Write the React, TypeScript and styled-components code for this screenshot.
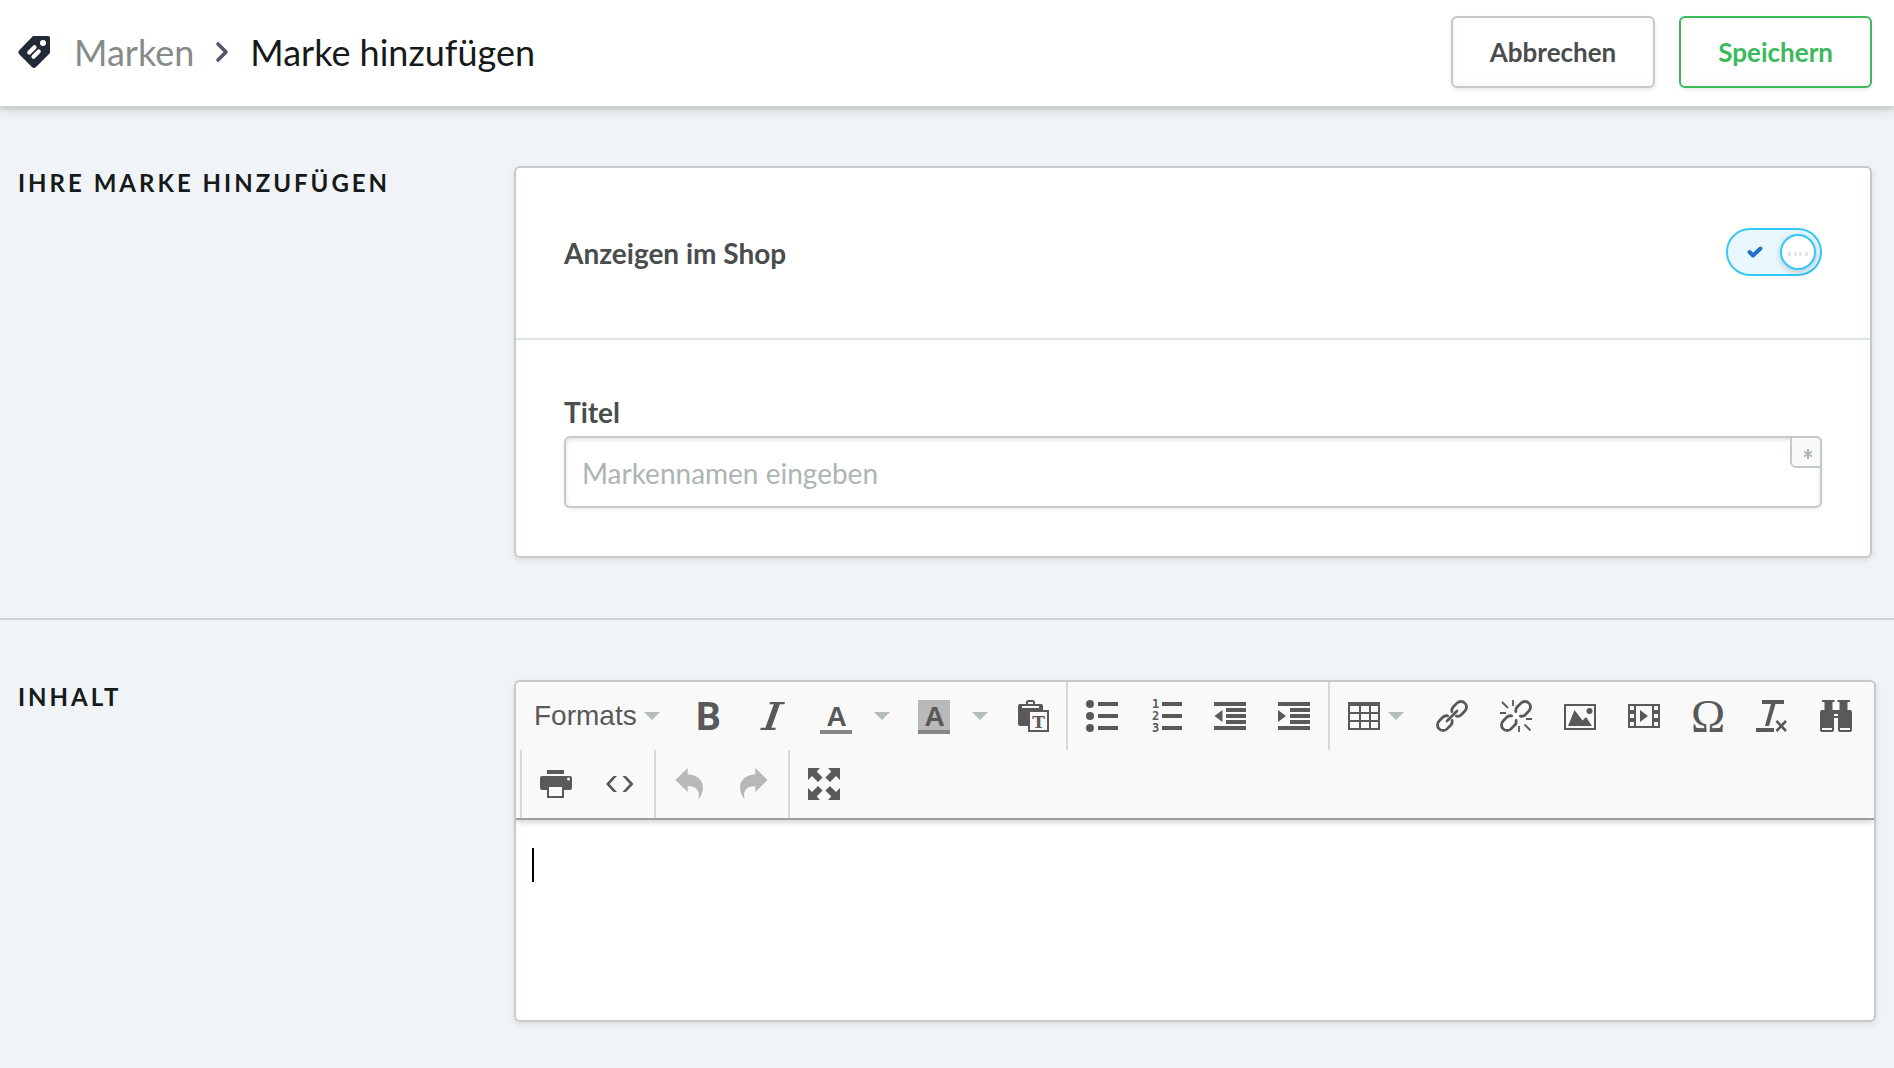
import React, { useState } from "react";
import styled, { createGlobalStyle } from "styled-components";

const line = "#c4c9cc";
const sans = `Lato, "Open Sans", sans-serif`;

const GlobalStyle = createGlobalStyle`
  *, *::before, *::after { box-sizing: border-box; }
  body {
    margin: 0;
    min-height: 100vh;
    background: #f0f4f7;
    color: #171a1a;
    font-family: ${sans};
  }
`;

const Header = styled.header`
  display: flex;
  align-items: center;
  justify-content: space-between;
  padding: 16px 22px 18px 18px;
  background: #fff;
  box-shadow: 0 4px 2px rgba(60, 70, 70, 0.1), 0 4px 12px rgba(0, 0, 0, 0.12);
`;

const Breadcrumb = styled.nav`
  display: flex;
  align-items: center;
  gap: 22px;
  font-size: 36px;
  line-height: 44px;
`;

const CrumbLink = styled.a`
  color: #858c8a;
  text-decoration: none;
`;

const CrumbTitle = styled.h1`
  margin: 0;
  font: inherit;
  color: #171a1a;
`;

const Actions = styled.div`
  display: flex;
  gap: 24px;
`;

const ActionButton = styled.button<{ $color: string; $line: string }>`
  height: 72px;
  padding: 0 37px;
  border: 2px solid ${(p) => p.$line};
  border-radius: 6px;
  background: #fff;
  color: ${(p) => p.$color};
  font: 700 26px/32px ${sans};
  box-shadow: 0 2px 4px rgba(0, 0, 0, 0.08), inset 0 -2px 8px rgba(0, 0, 0, 0.04);
  cursor: pointer;
`;

const Section = styled.section`
  display: grid;
  grid-template-columns: 496px minmax(0, 1fr);
  padding: 60px 22px 60px 18px;

  & + & {
    border-top: 2px solid #ced3d6;
  }
`;

const SectionTitle = styled.h2`
  margin: 0;
  font-size: 24px;
  font-weight: 700;
  line-height: 34px;
  letter-spacing: 3px;
  text-transform: uppercase;
`;

const Card = styled.div`
  border: 2px solid ${line};
  border-radius: 6px;
  background: #fff;
  box-shadow: 0 2px 6px rgba(0, 0, 0, 0.1);
`;

const CardRow = styled.div`
  padding: 48px;

  & + & {
    border-top: 2px solid #dfe5e4;
  }
`;

const SwitchRow = styled(CardRow)`
  display: flex;
  align-items: flex-start;
  justify-content: space-between;
  padding: 60px 48px;
`;

const FieldLabel = styled.label`
  display: block;
  color: #4a4d4d;
  font-size: 28px;
  font-weight: 700;
  line-height: 48px;
`;

const SwitchLabel = styled(FieldLabel)`
  line-height: 50px;
`;

const Switch = styled.label`
  display: flex;
  cursor: pointer;
`;

const SwitchInput = styled.input`
  position: absolute;
  width: 96px;
  height: 48px;
  margin: 0;
  opacity: 0;
  cursor: pointer;
`;

const Track = styled.span<{ $on: boolean }>`
  display: flex;
  flex-direction: ${(p) => (p.$on ? "row" : "row-reverse")};
  align-items: center;
  justify-content: space-between;
  width: 96px;
  height: 48px;
  padding: 0 4px 0 19px;
  border: 2px solid #34c8f9;
  border-radius: 24px;
  background: #e8f8fe;
`;

const Knob = styled.span`
  display: flex;
  align-items: center;
  justify-content: center;
  width: 36px;
  height: 36px;
  padding-top: 3px;
  border: 2px solid #34c8f9;
  border-radius: 50%;
  background: #fff;
  box-shadow: 0 2px 6px rgba(0, 0, 0, 0.2);
`;

const InputWrap = styled.div`
  position: relative;
`;

const TextInput = styled.input`
  display: block;
  width: 100%;
  height: 72px;
  padding: 2px 16px 0;
  border: 2px solid ${line};
  border-radius: 6px;
  background: #fff;
  color: #171a1a;
  font: 400 28px/36px ${sans};
  box-shadow: inset 0 2px 4px rgba(0, 0, 0, 0.12), 0 2px 4px rgba(0, 0, 0, 0.06);
  outline: none;

  &::placeholder {
    color: #acb5b3;
    opacity: 1;
  }
`;

const Required = styled.span`
  position: absolute;
  top: 0;
  right: 0;
  display: flex;
  align-items: center;
  justify-content: center;
  width: 32px;
  height: 32px;
  padding: 3px 0 0 4px;
  border: 2px solid ${line};
  border-radius: 0 6px 0 6px;
  background: #f9f9f9;
`;

const Editor = styled.div`
  margin-right: -4px;
  border: 2px solid ${line};
  border-radius: 6px;
  background: #fff;
  box-shadow: 0 2px 6px rgba(0, 0, 0, 0.1);
  overflow: hidden;
`;

const Toolbar = styled.div`
  display: flex;
  flex-wrap: wrap;
  padding-left: 4px;
  border-bottom: 2px solid #9e9e9e;
  background: #f9f9f9;
  box-shadow: 0 2px 6px rgba(0, 0, 0, 0.2);
`;

const Group = styled.div<{ $first?: boolean }>`
  display: flex;
  height: 68px;
  margin-right: 2px;
  padding-left: ${(p) => (p.$first ? 0 : 2)}px;
  border-left: ${(p) => (p.$first ? "none" : "2px solid #d9d9d9")};
`;

const ToolButton = styled.button`
  display: flex;
  align-items: center;
  gap: 8px;
  padding: 0 16px;
  border: 0;
  background: none;
  color: #595959;
  cursor: pointer;

  &:disabled {
    opacity: 0.4;
    cursor: default;
  }
`;

const OpenButton = styled(ToolButton)`
  width: 34px;
  padding: 0 6px;
`;

const FormatBox = styled.div`
  display: flex;
  align-items: center;
  width: 156px;
  padding-left: 14px;
`;

const FormatSelect = styled.select`
  width: 110px;
  height: 68px;
  padding: 0;
  border: 0;
  appearance: none;
  background: none;
  color: #595959;
  font: 400 28px/36px "Liberation Sans", Arial, sans-serif;
  outline: none;
  cursor: pointer;
`;

const Glyph = styled.svg`
  display: block;
  flex: none;
  overflow: visible;
`;

const TagGlyph = styled(Glyph)`
  margin-right: 2px;
`;

const Writing = styled.div`
  position: relative;
`;

const TextArea = styled.textarea`
  display: block;
  width: 100%;
  height: 200px;
  padding: 28px 16px;
  border: 0;
  background: transparent;
  color: #000;
  caret-color: transparent;
  font: 400 28px/34px ${sans};
  resize: none;
  outline: none;
`;

const Caret = styled.span`
  position: absolute;
  top: 28px;
  left: 16px;
  width: 2px;
  height: 34px;
  background: #000;
`;

function Icon({ children }: { children: React.ReactNode }) {
  return (
    <Glyph width="32" height="32" viewBox="0 0 32 32" fill="currentColor" aria-hidden="true">
      {children}
    </Glyph>
  );
}

function Arrow() {
  return (
    <Glyph width="16" height="8" viewBox="0 0 16 8" fill="#b5bcc0" aria-hidden="true">
      <path d="M0 0h16L8 8z" />
    </Glyph>
  );
}

const halfChain = "M3 -3.2A5.6 5.6 0 0 1 7.5 -5.6H12.6A5.6 5.6 0 0 1 12.6 5.6H7.5A5.6 5.6 0 0 1 3 3.2";
const chain = (
  <g transform="translate(16 16) rotate(-45)" fill="none" stroke="currentColor" strokeWidth="2.8" strokeLinecap="round">
    <path d={halfChain} />
    <path d={halfChain} transform="rotate(180)" />
  </g>
);
const backArrow = "M1.5 12L13.7 0V6.2C23 6.6 29 12 29 19.5C29 24 27 28.5 24.3 31.5C26.6 24 23 18 13.7 18V24Z";
const corner = <path d="M0 0H12L8.6 3.4L14.6 9.4L10 14L4 8L0 12Z" />;

const icons: Record<string, React.ReactNode> = {
  bold: (
    <text x="4" y="30" fontFamily="Roboto" fontWeight="700" fontSize="39">B</text>
  ),
  italic: <path d="M14 2h15l-.6 2.2h-4.6L15.4 27.8h4.4l-.6 2.2h-15l.6-2.2h4.6L17.8 4.2h-4.4z" />,
  color: (
    <>
      <text x="16.5" y="26" textAnchor="middle" fontFamily="Liberation Sans" fontWeight="700" fontSize="28">A</text>
      <rect y="30" width="32" height="4" fill="#858585" />
    </>
  ),
  background: (
    <>
      <rect width="32" height="34" fill="#b9b9b9" />
      <text x="16.5" y="26" textAnchor="middle" fontFamily="Liberation Sans" fontWeight="700" fontSize="28">A</text>
      <rect y="30" width="32" height="4" fill="#858585" />
    </>
  ),
  paste: (
    <g transform="translate(2 0)">
      <path d="M2 4h21a2 2 0 0 1 2 2v20H2a2 2 0 0 1-2-2V6a2 2 0 0 1 2-2z" />
      <path d="M9 5V2.500Q9 1 10.500 1H14.500Q16 1 16 2.500V5" fill="none" stroke="currentColor" strokeWidth="2" />
      <rect x="4" y="6" width="17" height="2" fill="#f9f9f9" />
      <rect x="11" y="11" width="19" height="20" fill="#f9f9f9" stroke="currentColor" strokeWidth="2" />
      <text x="20.500" y="28" textAnchor="middle" fontFamily="DejaVu Serif" fontWeight="700" fontSize="17">T</text>
    </g>
  ),
  bullets: (
    <>
      <circle cx="4" cy="4" r="4" /><circle cx="4" cy="16" r="4" /><circle cx="4" cy="28" r="4" />
      <path d="M12 2h20v4H12zM12 14h20v4H12zM12 26h20v4H12z" />
    </>
  ),
  numbers: (
    <>
      <g fontFamily="DejaVu Sans Mono" fontWeight="700" fontSize="12">
        <text x="2" y="8">1</text><text x="2" y="20">2</text><text x="2" y="32">3</text>
      </g>
      <path d="M12 2h20v4H12zM12 14h20v4H12zM12 26h20v4H12z" />
    </>
  ),
  outdent: <path d="M0 2h32v4H0zM12 8h20v4H12zM12 14h20v4H12zM12 20h20v4H12zM0 26h32v4H0zM8.500 10v12L.5 16z" />,
  indent: <path d="M0 2h32v4H0zM12 8h20v4H12zM12 14h20v4H12zM12 20h20v4H12zM0 26h32v4H0zM0 10v12l8-6z" />,
  table: (
    <path
      fillRule="evenodd"
      d="M0 2h32v28H0zM2 6v6h9V6zM13 6v6h8V6zM23 6v6h7V6zM2 14v6h9v-6zM13 14v6h8v-6zM23 14v6h7v-6zM2 22v6h9v-6zM13 22v6h8v-6zM23 22v6h7v-6z"
    />
  ),
  link: (
    <>
      {chain}
      <path d="M11 21L21 11" stroke="currentColor" strokeWidth="2.800" strokeLinecap="round" />
    </>
  ),
  unlink: (
    <>
      {chain}
      <path d="M2 2l6 6M13 0v6M0 13h6M26 19h6M19 26v6M24.500 24.500l6 6" stroke="currentColor" strokeWidth="1.800" />
    </>
  ),
  image: (
    <>
      <path fillRule="evenodd" d="M0 4h32v26H0zM2 6v22h28V6z" />
      <path d="M4 26l6.500-16L18.500 20.500 22 17l6 9z" />
      <circle cx="25.500" cy="11" r="3" />
    </>
  ),
  media: (
    <path
      fillRule="evenodd"
      d="M0 4h32v24H0zM2 6v4h4V6zM2 14v4h4v-4zM2 22v4h4v-4zM8 6v20h16V6zM26 6v4h4V6zM26 14v4h4v-4zM26 22v4h4v-4zM12 10l8 6-8 6z"
    />
  ),
  omega: (
    <text x="16" y="32" textAnchor="middle" fontFamily="Liberation Serif" fontSize="46">Ω</text>
  ),
  clear: (
    <>
      <path d="M6 0h22v4h-8.500L13 26H9l6-22H6zM0 28h18v4H0z" />
      <path d="M20.500 21l9.500 10M30 21l-9.500 10" stroke="currentColor" strokeWidth="2.600" />
    </>
  ),
  find: (
    <path
      fillRule="evenodd"
      d="M2 0h12.500v2h-2v8H14v0h4V10h1.500V2h-2V0H30v2h-2.500v8H30a2 2 0 0 1 2 2v18a2 2 0 0 1-2 2H20a2 2 0 0 1-2-2V18h-4v12a2 2 0 0 1-2 2H2a2 2 0 0 1-2-2V12a2 2 0 0 1 2-2h2.500V2H2zM14 14v2h4v-2zM2 28v2h10v-2zM20 28v2h10v-2z"
    />
  ),
  print: (
    <>
      <path d="M7 2h17v4H7z" />
      <rect y="8" width="32" height="14" rx="2" />
      <rect x="8" y="18" width="15" height="11" fill="#f9f9f9" stroke="currentColor" strokeWidth="2" />
      <circle cx="28.500" cy="11" r="1.500" fill="#f9f9f9" />
    </>
  ),
  code: <path d="M2 16l7.500-8H13l-7.300 8L13 24H9.500zM29.500 16L22 8h-3.500l7.300 8-7.300 8H22z" />,
  undo: <path d={backArrow} />,
  redo: <path d={backArrow} transform="translate(31 0) scale(-1 1)" />,
  fullscreen: (
    <>
      {corner}
      <g transform="translate(32 0) scale(-1 1)">{corner}</g>
      <g transform="translate(0 32) scale(1 -1)">{corner}</g>
      <g transform="translate(32 32) scale(-1 -1)">{corner}</g>
    </>
  ),
};

function Tool({ icon, label, disabled, menu }: { icon: string; label: string; disabled?: boolean; menu?: boolean }) {
  return (
    <ToolButton type="button" aria-label={label} disabled={disabled} aria-haspopup={menu ? "menu" : undefined}>
      <Icon>{icons[icon]}</Icon>
      {menu && <Arrow />}
    </ToolButton>
  );
}

function RichText() {
  return (
    <Editor>
      <Toolbar role="toolbar" aria-label="Inhalt formatieren">
        <Group $first>
          <FormatBox>
            <FormatSelect aria-label="Formats">
              <option>Formats</option>
            </FormatSelect>
            <Arrow />
          </FormatBox>
          <Tool icon="bold" label="Fett" />
          <Tool icon="italic" label="Kursiv" />
          <Tool icon="color" label="Textfarbe" />
          <OpenButton type="button" aria-label="Textfarbe wählen"><Arrow /></OpenButton>
          <Tool icon="background" label="Hintergrundfarbe" />
          <OpenButton type="button" aria-label="Hintergrundfarbe wählen"><Arrow /></OpenButton>
          <Tool icon="paste" label="Als Text einfügen" />
        </Group>
        <Group>
          <Tool icon="bullets" label="Aufzählung" />
          <Tool icon="numbers" label="Nummerierte Liste" />
          <Tool icon="outdent" label="Einzug verkleinern" />
          <Tool icon="indent" label="Einzug vergrößern" />
        </Group>
        <Group>
          <Tool icon="table" label="Tabelle" menu />
          <Tool icon="link" label="Link einfügen" />
          <Tool icon="unlink" label="Link entfernen" />
          <Tool icon="image" label="Bild einfügen" />
          <Tool icon="media" label="Video einfügen" />
          <Tool icon="omega" label="Sonderzeichen" />
          <Tool icon="clear" label="Formatierung entfernen" />
          <Tool icon="find" label="Suchen und ersetzen" />
        </Group>
        <Group>
          <Tool icon="print" label="Drucken" />
          <Tool icon="code" label="Quelltext" />
        </Group>
        <Group>
          <Tool icon="undo" label="Rückgängig" disabled />
          <Tool icon="redo" label="Wiederholen" disabled />
        </Group>
        <Group>
          <Tool icon="fullscreen" label="Vollbild" />
        </Group>
      </Toolbar>
      <Writing>
        <TextArea aria-labelledby="content-title" />
        <Caret />
      </Writing>
    </Editor>
  );
}

export default function App() {
  const [visible, setVisible] = useState(true);
  return (
    <>
      <GlobalStyle />
      <Header>
        <Breadcrumb aria-label="Brotkrumen">
          <TagGlyph width="32" height="32" viewBox="0 0 32 32" aria-hidden="true">
            <path d="M15 0H30Q32 0 32 2V17L18 31Q16 33 14 31L1 18Q-.5 16 1 14.500Z" fill="#222939" />
            <circle cx="25" cy="7" r="3" fill="#fff" />
            <path d="M11.300 16.500L16.500 11.300M15.500 20.700L20.700 15.500" stroke="#fff" strokeWidth="4.200" strokeLinecap="round" />
          </TagGlyph>
          <CrumbLink href="#marken">Marken</CrumbLink>
          <Glyph width="12" height="20" viewBox="0 0 12 20" aria-hidden="true">
            <path d="M2 2l8 8-8 8" fill="none" stroke="#4f5666" strokeWidth="3.600" strokeLinecap="round" strokeLinejoin="round" />
          </Glyph>
          <CrumbTitle>Marke hinzufügen</CrumbTitle>
        </Breadcrumb>
        <Actions>
          <ActionButton type="button" $color="#4a4d4d" $line={line}>Abbrechen</ActionButton>
          <ActionButton type="submit" $color="#3cb95d" $line="#3cb95d">Speichern</ActionButton>
        </Actions>
      </Header>
      <main>
        <Section>
          <SectionTitle>Ihre Marke hinzufügen</SectionTitle>
          <Card>
            <SwitchRow>
              <SwitchLabel htmlFor="visible">Anzeigen im Shop</SwitchLabel>
              <Switch>
                <SwitchInput id="visible" type="checkbox" checked={visible} onChange={(e) => setVisible(e.target.checked)} />
                <Track $on={visible}>
                  <Glyph width="16" height="12" viewBox="0 0 16 12" aria-hidden="true">
                    <path d="M2.500 6l3.500 3.500L13.500 2.500" fill="none" stroke="#2472c8" strokeWidth="4" strokeLinecap="round" strokeLinejoin="round" />
                  </Glyph>
                  <Knob>
                    <Glyph width="20" height="4" viewBox="0 0 20 4" fill="#dfe3e3" aria-hidden="true">
                      <rect x="0" width="3" height="4" rx="1" />
                      <rect x="6" width="3" height="4" rx="1" />
                      <rect x="11" width="3" height="4" rx="1" />
                      <rect x="17" width="3" height="4" rx="1" />
                    </Glyph>
                  </Knob>
                </Track>
              </Switch>
            </SwitchRow>
            <CardRow>
              <FieldLabel htmlFor="brand-title">Titel</FieldLabel>
              <InputWrap>
                <TextInput id="brand-title" type="text" placeholder="Markennamen eingeben" required />
                <Required>
                  <Glyph width="10" height="10" viewBox="0 0 10 10" aria-hidden="true">
                    <path d="M5 0v10M1 2.500l8 5M9 2.500l-8 5" stroke="#acb5b3" strokeWidth="2" />
                  </Glyph>
                </Required>
              </InputWrap>
            </CardRow>
          </Card>
        </Section>
        <Section>
          <SectionTitle id="content-title">Inhalt</SectionTitle>
          <RichText />
        </Section>
      </main>
    </>
  );
}
